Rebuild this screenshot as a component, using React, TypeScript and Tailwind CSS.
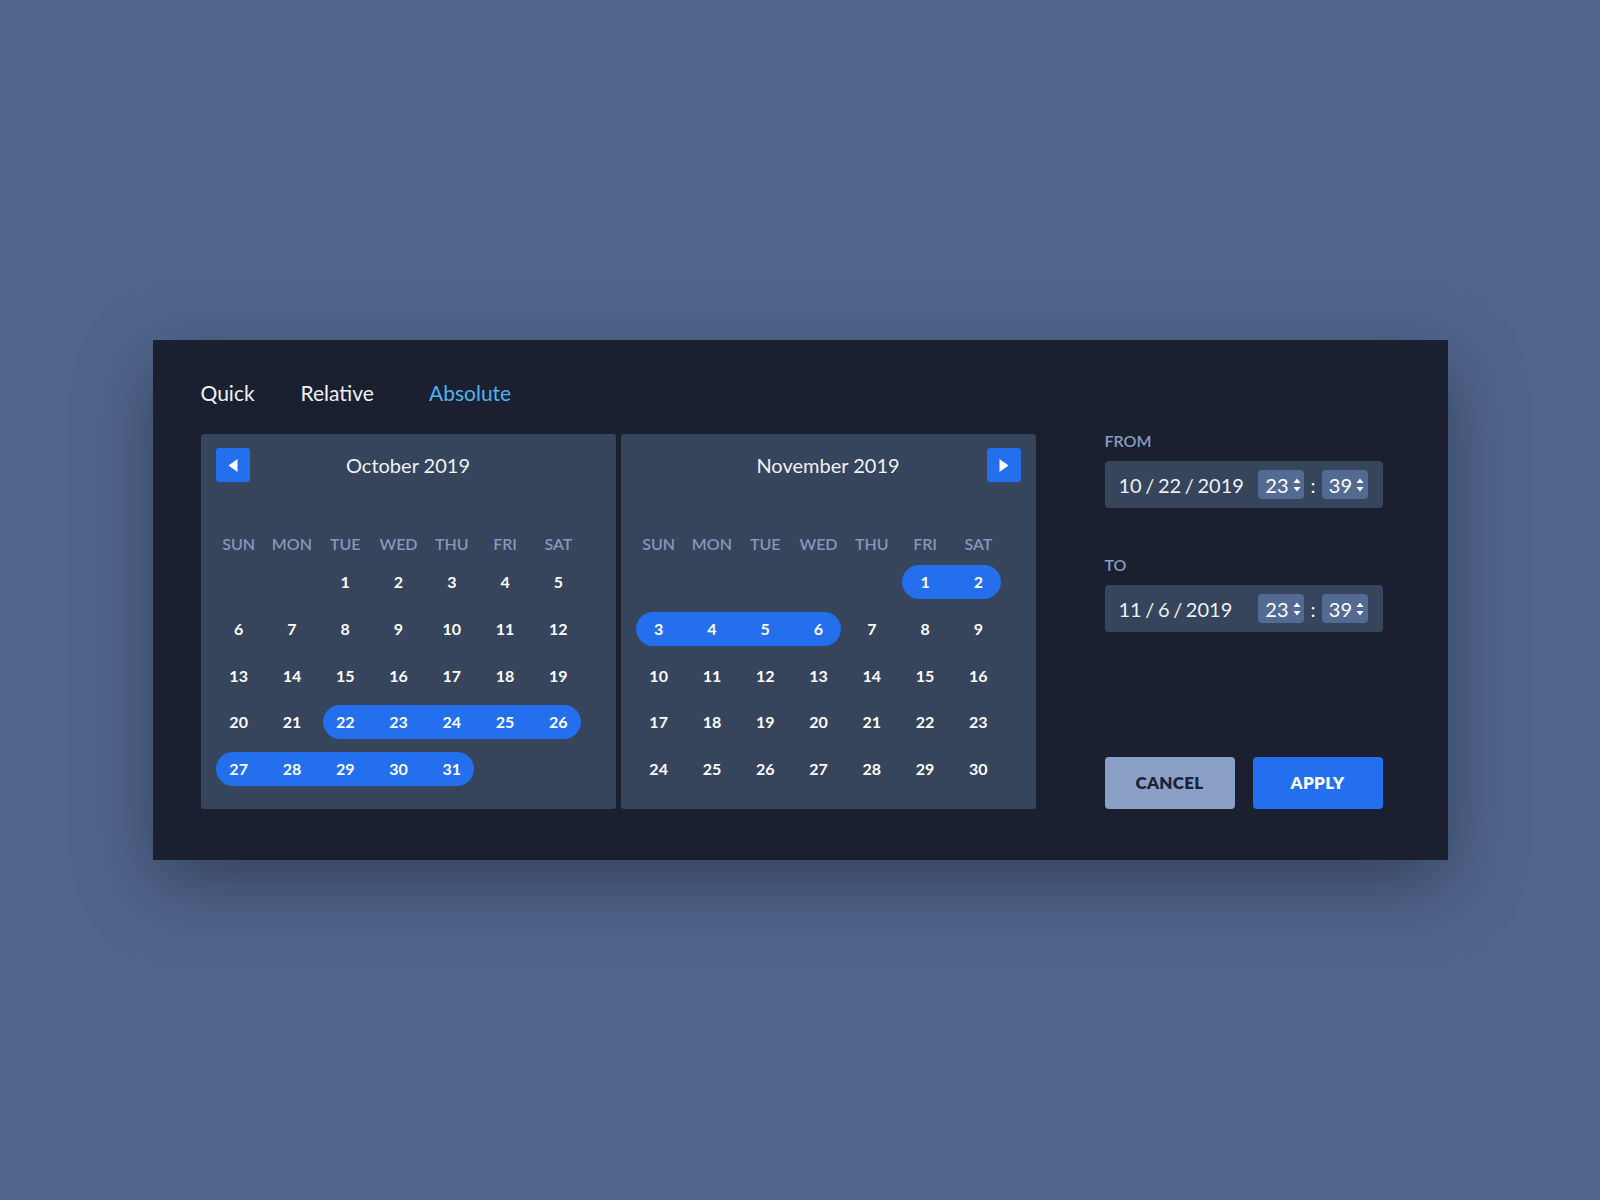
import React from "react";

const WEEKDAYS = ["SUN", "MON", "TUE", "WED", "THU", "FRI", "SAT"];

type Cell = number | null;

const OCT: Cell[][] = [
  [null, null, 1, 2, 3, 4, 5],
  [6, 7, 8, 9, 10, 11, 12],
  [13, 14, 15, 16, 17, 18, 19],
  [20, 21, 22, 23, 24, 25, 26],
  [27, 28, 29, 30, 31, null, null],
];

const NOV: Cell[][] = [
  [null, null, null, null, null, 1, 2],
  [3, 4, 5, 6, 7, 8, 9],
  [10, 11, 12, 13, 14, 15, 16],
  [17, 18, 19, 20, 21, 22, 23],
  [24, 25, 26, 27, 28, 29, 30],
];

function Arrow({ dir }: { dir: "left" | "right" }) {
  return (
    <button className="flex h-[34px] w-[34px] items-center justify-center rounded-[3px] bg-[#236fee]">
      <svg width="10" height="13" viewBox="0 0 10 13">
        {dir === "left" ? (
          <path d="M9.5 0 V13 L0.5 6.5 Z" fill="#fff" />
        ) : (
          <path d="M0.5 0 V13 L9.5 6.5 Z" fill="#fff" />
        )}
      </svg>
    </button>
  );
}

function Month({
  title,
  rows,
  range,
  nav,
}: {
  title: string;
  rows: Cell[][];
  range: [number, number];
  nav: "left" | "right";
}) {
  const inRange = (d: Cell) => d !== null && d >= range[0] && d <= range[1];
  return (
    <div className="h-[375px] w-[415px] rounded-[3px] bg-[#36445c] pt-[14px]">
      <div className="grid h-[34px] grid-cols-[34px_1fr_34px] items-center px-[15px]">
        <div>{nav === "left" && <Arrow dir="left" />}</div>
        <div className="text-center text-[20px] text-[#eef1f6]">{title}</div>
        <div>{nav === "right" && <Arrow dir="right" />}</div>
      </div>

      <div className="mt-[47px] pl-[11.5px]">
        <div className="grid h-[30px] w-[373px] grid-cols-7 items-center">
          {WEEKDAYS.map((w) => (
            <div key={w} className="text-center text-[16px] font-semibold text-[#8797ba]">
              {w}
            </div>
          ))}
        </div>
        {rows.map((row, ri) => (
          <div key={ri} className="grid h-[46.7px] w-[373px] grid-cols-7 items-center">
            {row.map((d, ci) => {
              const on = inRange(d);
              const first = on && (ci === 0 || !inRange(row[ci - 1]));
              const last = on && (ci === 6 || !inRange(row[ci + 1]));
              return (
                <div
                  key={ci}
                  className={
                    "flex h-[34px] items-center justify-center text-[16px] font-bold text-white " +
                    (on ? "bg-[#236fee] " : "") +
                    (first ? "ml-[4px] rounded-l-full " : "") +
                    (last ? "mr-[4px] rounded-r-full " : "")
                  }
                >
                  <span className={first ? "-ml-[4px]" : last ? "-mr-[4px]" : ""}>{d ?? ""}</span>
                </div>
              );
            })}
          </div>
        ))}
      </div>
    </div>
  );
}

function Spinner() {
  return (
    <svg width="8" height="14" viewBox="0 0 8 14" className="ml-[4px]">
      <path d="M4 0.5 L7.5 5 H0.5 Z" fill="#fff" />
      <path d="M0.5 9 H7.5 L4 13.5 Z" fill="#fff" />
    </svg>
  );
}

function TimeBox({ value }: { value: string }) {
  return (
    <div className="flex h-[29px] w-[46px] items-center rounded-[4px] bg-[#536a93] pl-[7px] text-[20px] text-white">
      {value}
      <Spinner />
    </div>
  );
}

function DateField({ label, date }: { label: string; date: string }) {
  return (
    <div>
      <div className="h-[13px] text-[16px] font-semibold leading-[13px] text-[#8a9cc0]">{label}</div>
      <div className="mt-[14px] flex h-[47px] items-center rounded-[4px] bg-[#36445c] pl-[14px] pr-[15px]">
        <div className="w-[141px] text-[20px] text-[#eef1f6] [word-spacing:-1.5px]">{date}</div>
        <TimeBox value="23" />
        <div className="w-[18px] text-center text-[20px] text-white">:</div>
        <TimeBox value="39" />
      </div>
    </div>
  );
}

export default function App() {
  return (
    <div className="flex h-[1200px] w-full items-center justify-center bg-[#52668d] font-['Lato',sans-serif]">
      <div className="h-[520px] w-[1295px] bg-[#1b2030] pl-[48px] pr-[65px] pt-[39px] shadow-[0_24px_70px_rgba(15,20,35,0.45)]">
        <div className="flex h-[28px] items-center text-[21px] leading-[28px]">
          <span className="w-[100px] text-[#eef1f6]">Quick</span>
          <span className="w-[128.5px] text-[#eef1f6]">Relative</span>
          <span className="text-[#4fb4ec]">Absolute</span>
        </div>

        <div className="mt-[27px] flex">
          <div className="flex gap-[5px]">
            <Month title="October 2019" rows={OCT} range={[22, 31]} nav="left" />
            <Month title="November 2019" rows={NOV} range={[1, 6]} nav="right" />
          </div>

          <div className="ml-[69px] flex h-[375px] w-[278px] flex-col">
            <DateField label="FROM" date="10 / 22 / 2019" />
            <div className="mt-[50px]">
              <DateField label="TO" date="11 / 6 / 2019" />
            </div>
            <div className="mt-auto flex gap-[18px]">
              <button className="h-[52px] w-[130px] rounded-[4px] bg-[#8aa0c7] text-[17px] font-extrabold tracking-[0.3px] text-[#1c2434]">
                CANCEL
              </button>
              <button className="h-[52px] w-[130px] rounded-[4px] bg-[#236fee] text-[17px] font-extrabold tracking-[0.3px] text-white">
                APPLY
              </button>
            </div>
          </div>
        </div>
      </div>
    </div>
  );
}
